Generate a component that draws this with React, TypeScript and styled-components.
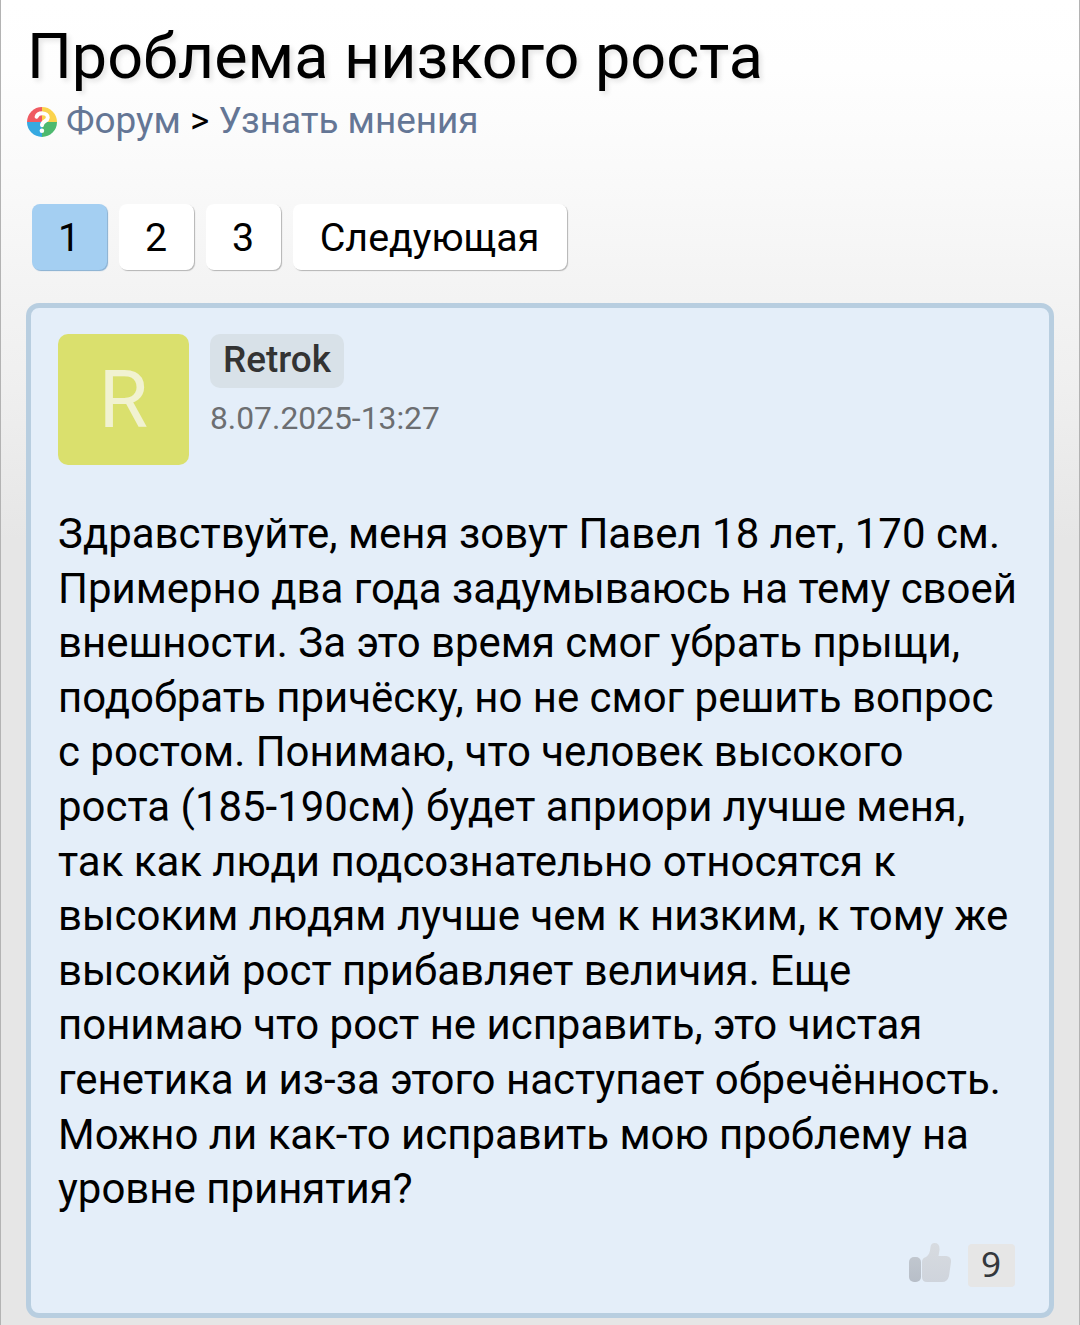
import React from "react";
import styled, { createGlobalStyle } from "styled-components";

const GlobalStyle = createGlobalStyle`
  * { box-sizing: border-box; }
  body {
    margin: 0;
    font-family: Roboto, "Liberation Sans", sans-serif;
    color: #000;
    background: #e6e6e6;
  }
`;

const Page = styled.main`
  height: 1325px;
  overflow: hidden;
  padding: 0 25px;
  border-left: 1px solid #b3b3b3;
  border-right: 1px solid #b3b3b3;
  background: linear-gradient(
    to bottom,
    #ffffff 0,
    #fefefe 70px,
    #fafafa 165px,
    #f3f3f3 300px,
    #efefef 390px,
    #e6e6e6 540px
  );
`;

const Title = styled.h1`
  margin: 0;
  padding: 19px 0 0 1px;
  font-size: 62.9px;
  font-weight: 400;
  line-height: 76px;
  white-space: nowrap;
  text-shadow: 3px 3px 5px rgba(0, 0, 0, 0.1);
`;

const Breadcrumbs = styled.nav`
  display: flex;
  align-items: center;
  height: 51px;
  font-size: 36.9px;
  white-space: pre;
`;

const ForumIcon = styled.svg`
  width: 32px;
  height: 32px;
  margin: 2px 8px 0 0;
`;

const CrumbLink = styled.a`
  color: #647695;
`;

const Pager = styled.div`
  display: flex;
  gap: 12px;
  margin: 58px 0 0 6px;
`;

const PageButton = styled.a<{ $active?: boolean; $width: number }>`
  display: flex;
  justify-content: center;
  width: ${(p) => p.$width}px;
  height: 66px;
  padding-right: 1px;
  border-radius: 8px;
  font-size: 39.4px;
  line-height: 67px;
  background: ${(p) => (p.$active ? "#a4cff2" : "#fff")};
  box-shadow: 1px 1px 1px ${(p) => (p.$active ? "#86aed1" : "#b4b4b4")};
`;

const Card = styled.article`
  display: flex;
  flex-direction: column;
  height: 1015px;
  margin-top: 33px;
  padding: 26px 34px 0 27px;
  border: 5px solid #b8cee0;
  border-radius: 13px;
  background: #e4eef9;
`;

const Author = styled.header`
  display: flex;
  gap: 21px;
`;

const Avatar = styled.div`
  width: 131px;
  height: 131px;
  border-radius: 10px;
  background: #dae06d;
  color: #f1f2d1;
  font-size: 80px;
  line-height: 133px;
  text-align: center;
`;

const AuthorInfo = styled.div`
  display: flex;
  flex-direction: column;
  align-items: flex-start;
`;

const UserName = styled.a`
  height: 54px;
  padding: 0 13px;
  border-radius: 10px;
  background: #d8e1e8;
  color: #333;
  font-size: 36.9px;
  font-weight: 500;
  line-height: 52px;
`;

const PostDate = styled.time`
  margin-top: 11px;
  color: #6c6e71;
  font-size: 31.8px;
  line-height: 38px;
`;

const PostText = styled.p`
  margin: 42px 0 0;
  font-size: 41.96px;
  line-height: 54.6px;
  white-space: pre;
`;

const Footer = styled.footer`
  display: flex;
  justify-content: flex-end;
  gap: 16px;
  margin-top: 27px;
`;

const ThumbIcon = styled.svg`
  width: 44px;
  height: 42px;
  margin-top: -2px;
`;

const LikeCount = styled.span`
  width: 47px;
  height: 43px;
  padding-right: 1px;
  border-radius: 4px;
  background: #e6e6e6;
  color: #34383c;
  font-family: "Noto Sans", sans-serif;
  font-size: 35px;
  line-height: 39px;
  text-align: center;
`;

const lines = [
  "Здравствуйте, меня зовут Павел 18 лет, 170 см.",
  "Примерно два года задумываюсь на тему своей",
  "внешности. За это время смог убрать прыщи,",
  "подобрать причёску, но не смог решить вопрос",
  "с ростом. Понимаю, что человек высокого",
  "роста (185-190см) будет априори лучше меня,",
  "так как люди подсознательно относятся к",
  "высоким людям лучше чем к низким, к тому же",
  "высокий рост прибавляет величия. Еще",
  "понимаю что рост не исправить, это чистая",
  "генетика и из-за этого наступает обречённость.",
  "Можно ли как-то исправить мою проблему на",
  "уровне принятия?",
];

export default function App() {
  return (
    <>
      <GlobalStyle />
      <Page>
        <Title>Проблема низкого роста</Title>
        <Breadcrumbs>
          <ForumIcon viewBox="0 0 32 32">
            <path d="M16 16V1A15 15 0 0 0 1 16Z" fill="#ef5b62" />
            <path d="M16 16V1A15 15 0 0 1 31 16Z" fill="#fbd34d" />
            <path d="M16 16H1A15 15 0 0 0 16 31Z" fill="#35a9e1" />
            <path d="M16 16H31A15 15 0 0 1 16 31Z" fill="#4db96f" />
            <path
              d="M10.6 10.8C12 6 22 6.2 21.8 11.6C21.6 15.4 16.2 15 16 19.2"
              fill="none"
              stroke="#fff"
              strokeWidth="4"
              strokeLinecap="round"
            />
            <circle cx="15.9" cy="24.8" r="2.3" fill="#fff" />
          </ForumIcon>
          <CrumbLink>Форум</CrumbLink>
          <span>{" > "}</span>
          <CrumbLink>Узнать мнения</CrumbLink>
        </Breadcrumbs>
        <Pager>
          <PageButton $active $width={75}>1</PageButton>
          <PageButton $width={75}>2</PageButton>
          <PageButton $width={75}>3</PageButton>
          <PageButton $width={274}>Следующая</PageButton>
        </Pager>
        <Card>
          <Author>
            <Avatar>R</Avatar>
            <AuthorInfo>
              <UserName>Retrok</UserName>
              <PostDate>8.07.2025-13:27</PostDate>
            </AuthorInfo>
          </Author>
          <PostText>{lines.join("\n")}</PostText>
          <Footer>
            <ThumbIcon viewBox="0 0 44 42">
              <defs>
                <linearGradient id="cuff" x1="0" y1="0" x2="0" y2="1">
                  <stop offset="0" stopColor="#c1c7cf" />
                  <stop offset="1" stopColor="#b7bec8" />
                </linearGradient>
                <linearGradient id="hand" x1="0" y1="0" x2="0" y2="1">
                  <stop offset="0" stopColor="#d7dbe0" />
                  <stop offset="1" stopColor="#cfd4dc" />
                </linearGradient>
              </defs>
              <rect x="1" y="15" width="12" height="25" rx="5" fill="url(#cuff)" />
              <path
                d="M14 20Q14 16 18 15C21 13 22 10 22.5 5Q23 1 26.5 1Q32 1 31.5 8L30.5 14H38Q43.5 14.5 43 20L41 34Q39.5 40 34 40H19Q14 40 14 35Z"
                fill="url(#hand)"
              />
            </ThumbIcon>
            <LikeCount>9</LikeCount>
          </Footer>
        </Card>
      </Page>
    </>
  );
}
